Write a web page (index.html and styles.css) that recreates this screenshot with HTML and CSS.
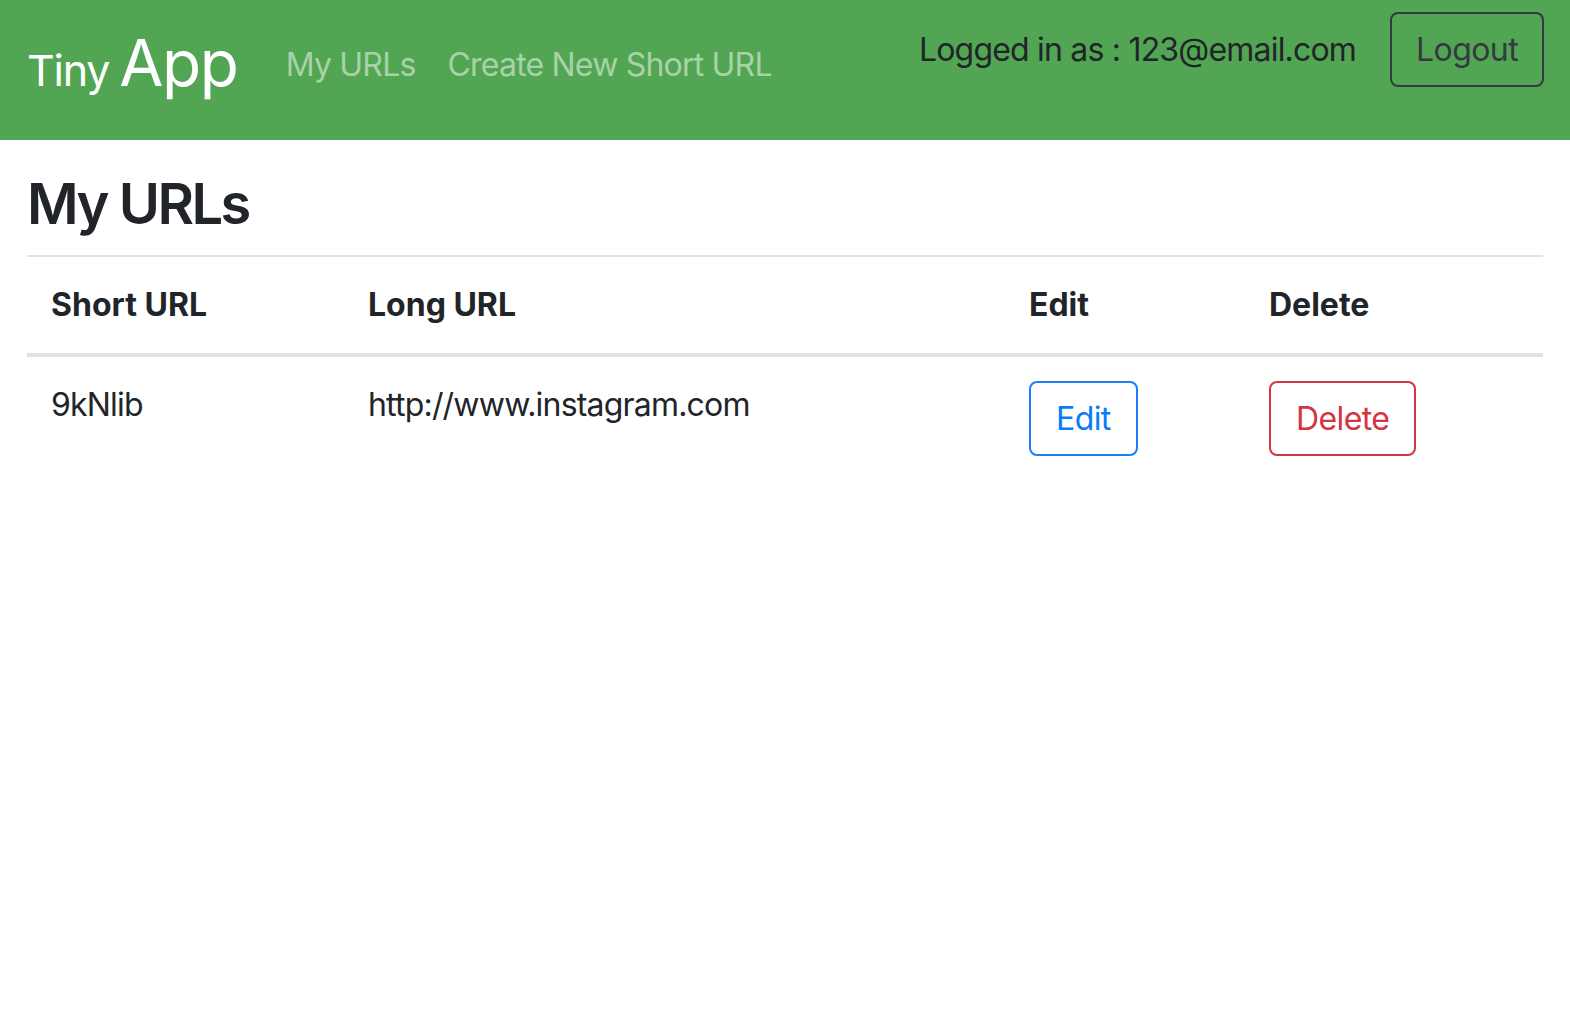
FILE: index.html
```html
<!DOCTYPE html>
<html lang="en">
<head>
<meta charset="utf-8">
<title>Tiny App</title>
<link rel="stylesheet" href="styles.css">
</head>
<body>
<nav class="navbar">
  <a class="brand" href="#"><span class="brand-small">Tiny</span><span class="brand-big">App</span></a>
  <div class="nav-links">
    <a class="nav-link" href="#">My URLs</a>
    <a class="nav-link" href="#">Create New Short URL</a>
  </div>
  <div class="nav-right">
    <span class="user">Logged in as : 123@email.com</span>
    <button class="btn btn-dark-outline">Logout</button>
  </div>
</nav>
<main class="container">
  <h3 class="title">My URLs</h3>
  <table class="table">
    <colgroup>
      <col class="c-short">
      <col class="c-long">
      <col class="c-edit">
      <col class="c-delete">
    </colgroup>
    <thead>
      <tr>
        <th>Short URL</th>
        <th>Long URL</th>
        <th>Edit</th>
        <th>Delete</th>
      </tr>
    </thead>
    <tbody>
      <tr>
        <td>9kNlib</td>
        <td>http://www.instagram.com</td>
        <td><button class="btn btn-primary-outline">Edit</button></td>
        <td><button class="btn btn-danger-outline">Delete</button></td>
      </tr>
    </tbody>
  </table>
</main>
</body>
</html>
```

FILE: styles.css
```css
* { box-sizing: border-box; }

html, body {
  margin: 0;
  padding: 0;
  background: #ffffff;
}

body {
  font-family: Inter, "Noto Sans", "Liberation Sans", sans-serif;
  font-size: 32px;
  line-height: 1.5;
  color: #212529;
  letter-spacing: -0.8px;
}

.navbar {
  display: flex;
  align-items: flex-start;
  height: 140px;
  padding: 0 26px 0 27px;
  background: #52a552;
}

.brand {
  display: flex;
  align-items: baseline;
  margin-top: 31px;
  color: #ffffff;
  text-decoration: none;
  line-height: 1;
}

.brand-small {
  font-size: 43px;
  letter-spacing: -1.2px;
  margin-right: 10px;
}

.brand-big {
  font-size: 64px;
  letter-spacing: -1.4px;
}

.nav-links {
  display: flex;
  margin-top: 41px;
  margin-left: 32px;
}

.nav-link {
  padding: 0 16px;
  color: rgba(255, 255, 255, 0.5);
  text-decoration: none;
  line-height: 48px;
}

.nav-right {
  display: flex;
  align-items: center;
  gap: 34px;
  margin-left: auto;
  margin-top: 12px;
}

.user {
  color: #212529;
  line-height: 48px;
}

.btn {
  font-family: inherit;
  font-size: 32px;
  letter-spacing: -0.6px;
  line-height: 48px;
  padding: 11.5px 25px;
  background: transparent;
  border: 2px solid;
  border-radius: 8px;
  cursor: pointer;
}

.btn-dark-outline {
  color: #343a40;
  border-color: #343a40;
  padding-left: 24px;
  padding-right: 24px;
}

.btn-primary-outline {
  color: #0a7bfa;
  border-color: #1a7ff8;
}

.btn-danger-outline {
  color: #d4343f;
  border-color: #d4343f;
}

.container {
  padding: 0 27px;
}

.title {
  margin: 31px 0 17px;
  font-size: 56px;
  font-weight: 600;
  letter-spacing: -2.5px;
  line-height: 1.2;
}

.table {
  width: 100%;
  border-collapse: collapse;
  table-layout: fixed;
}

.c-short { width: 317px; }
.c-long { width: 661px; }
.c-edit { width: 240px; }
.c-delete { width: 298px; }

.table th,
.table td {
  padding: 24px;
  text-align: left;
  vertical-align: top;
  border-top: 2px solid #dee2e6;
}

.table th {
  font-weight: 700;
  letter-spacing: 0;
  vertical-align: bottom;
  border-bottom: 4px solid #dee2e6;
}
```
